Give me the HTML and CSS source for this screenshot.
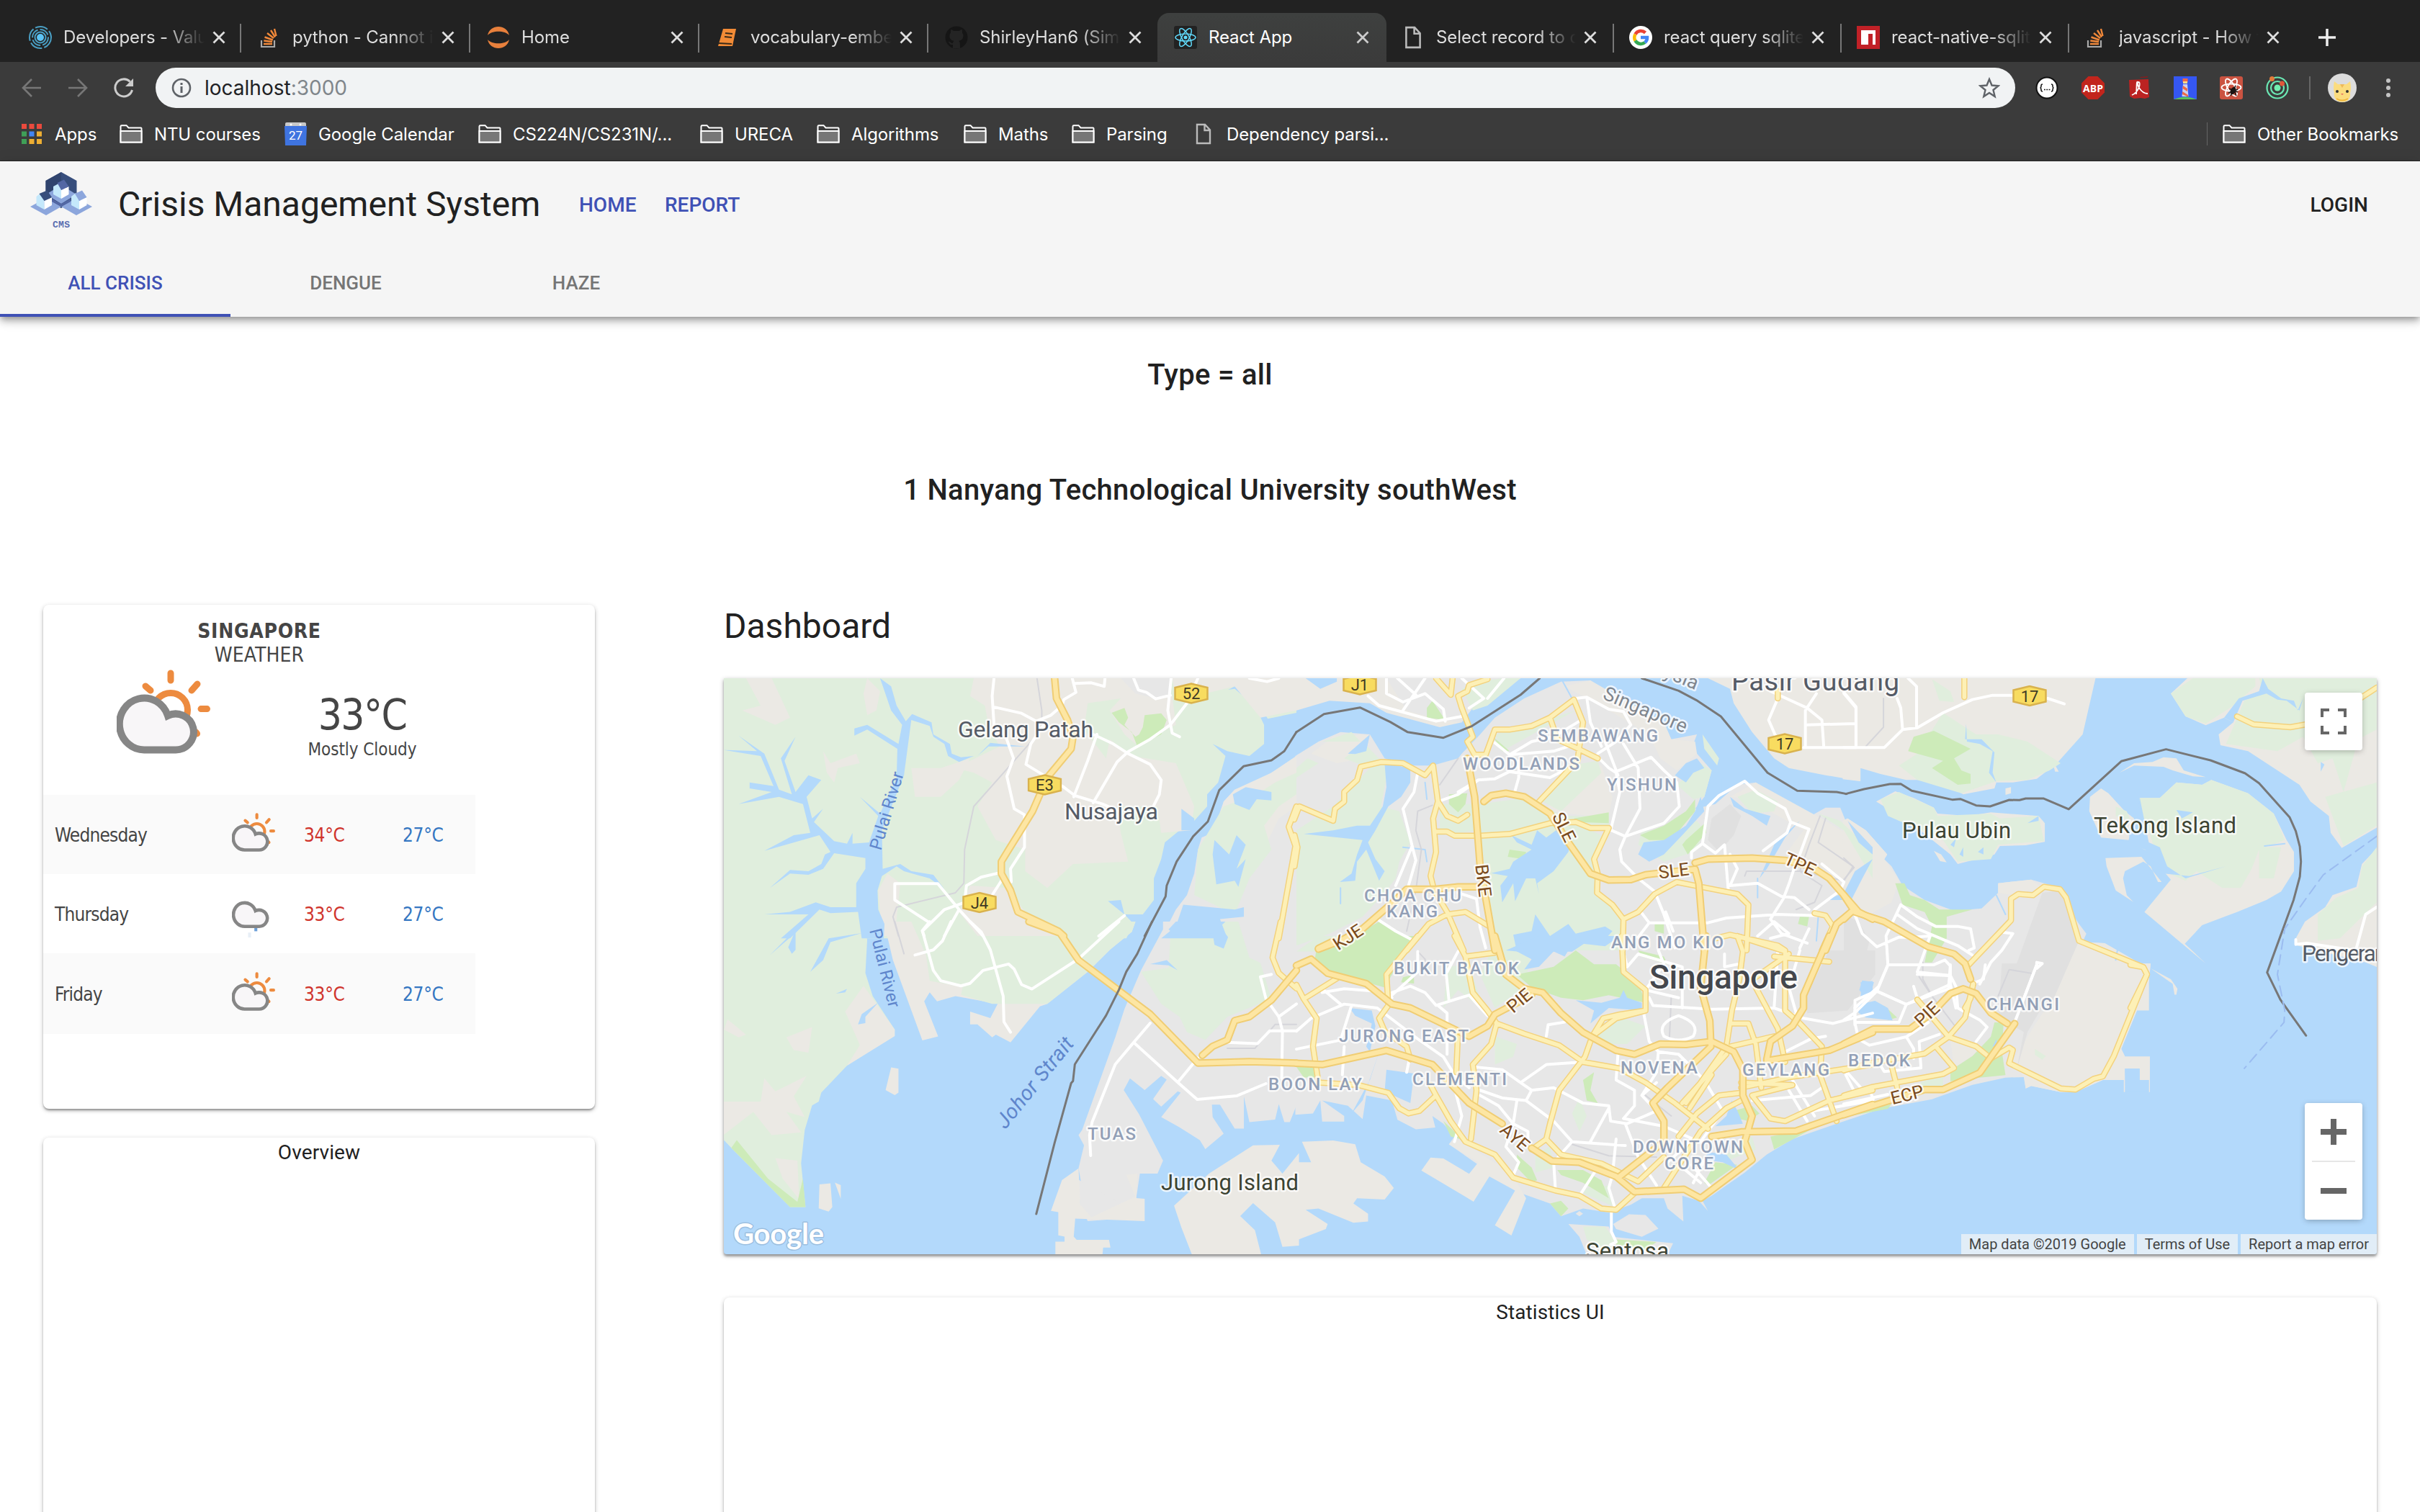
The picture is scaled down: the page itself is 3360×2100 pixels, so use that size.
FILE: index.html
```html
<!DOCTYPE html>
<html lang="en">
<head>
<meta charset="utf-8">
<title>React App</title>
<link rel="stylesheet" href="styles.css">
</head>
<body>
<svg class="sprite" width="0" height="0">
  <defs>
    <symbol id="folder" viewBox="0 0 32 26"><path d="M1.5 24.5V2.5Q1.5 1.2 3 1.2H9.5L12.5 4.5H29.5Q30.5 4.5 30.5 5.5V24.5Z" fill="#3b3b3b" stroke="#fff" stroke-width="2"/><path d="M1.5 9H30.5V24.5H1.5Z" fill="#777" stroke="#fff" stroke-width="2"/></symbol>
    <symbol id="page" viewBox="0 0 22 30"><path d="M2 2H13L20 9.500V28H2ZM12.500 2V10H20" fill="none" stroke="#bbb" stroke-width="2.400"/></symbol>
    <symbol id="x" viewBox="0 0 18 18"><path d="M1.500 1.500L16.500 16.500M16.500 1.500L1.500 16.500" stroke="currentColor" stroke-width="2.800"/></symbol>
    <symbol id="stack" viewBox="0 0 32 32"><path d="M5 20V29H23V20" fill="none" stroke="#aaa" stroke-width="2.200"/><path d="M8 25H20M8.300 20.500L20 22M9.500 15.500L20.800 19.500M13 10L22 17M18 6L24 15.500M23 4L25.500 14" stroke="#f0883a" stroke-width="2.400"/></symbol>
    <symbol id="sun-cloud" viewBox="0 0 130 117">
      <g stroke="#ed8b3f" stroke-width="9" stroke-linecap="round" fill="none"><path d="M75 5V15M117 54.600H125.500M40 23L47 29M112 20L104 29M110 87L111.500 89"/><circle cx="75" cy="56" r="23.500"/></g>
      <path d="M40 111.500H82A25 25 0 1 0 71 64A34.500 36 0 1 0 40 111.500Z" fill="#f8f6f8" stroke="#868686" stroke-width="10"/>
    </symbol>
    <symbol id="rain-cloud" viewBox="0 0 130 140">
      <path d="M72 105V119" stroke="#6c9fd8" stroke-width="9"/><path d="M53 123V138" stroke="#e8eff6" stroke-width="9"/>
      <path transform="translate(0 -7)" d="M40 111.500H82A25 25 0 1 0 71 64A34.500 36 0 1 0 40 111.500Z" fill="#f8f6f8" stroke="#868686" stroke-width="10"/>
    </symbol>
    <symbol id="shield" viewBox="0 0 48 30"><path d="M1.500 7L24 1.500L46.500 7V23L24 28.500L1.500 23Z" fill="#f8dc60" stroke="#d9b24d" stroke-width="2.500"/></symbol>
  </defs>
</svg>

<header class="browser">
  <div class="tabstrip">
    <div class="tab"><svg class="fav" viewBox="0 0 32 32"><g fill="none" stroke="#4a9fc4" stroke-width="2"><circle cx="16" cy="16" r="15" stroke-dasharray="18 3"/><circle cx="16" cy="16" r="11" stroke-dasharray="14 3"/><circle cx="16" cy="16" r="7.500"/></g><circle cx="16" cy="16" r="5" fill="#5cc4f5"/></svg><span class="label">Developers - Value</span><svg class="x"><use href="#x"/></svg></div>
    <div class="tab"><svg class="fav"><use href="#stack"/></svg><span class="label">python - Cannot i</span><svg class="x"><use href="#x"/></svg></div>
    <div class="tab"><svg class="fav" viewBox="0 0 32 32"><path d="M1 13C4-3 28-3 31 13C25 6 7 6 1 13ZM1 19C4 35 28 35 31 19C25 26 7 26 1 19Z" fill="#e8803c"/></svg><span class="label">Home</span><svg class="x"><use href="#x"/></svg></div>
    <div class="tab"><svg class="fav" viewBox="0 0 32 32"><path d="M10 4H28L23 28H3Z" fill="#f28b36"/><path d="M13 10L23 11M12 15L22 16M4 24L22 25" stroke="#3a2a18" stroke-width="2"/></svg><span class="label">vocabulary-embed</span><svg class="x"><use href="#x"/></svg></div>
    <div class="tab no-line"><svg class="fav" viewBox="0 0 32 32"><circle cx="16" cy="16" r="15.500" fill="#151515"/><path d="M11 31V26C6 27 7 23 4 22C8 21 8 25 11 24C11 22 12 21 13 21C7 20 6 16 6.500 13C6.500 11 8 10 8 9C8 8 8 6 8.500 5C10 5 12 7 12 7H20C20 7 22 5 23.500 5C24 6 24 8 24 9C24 10 26 12 25.500 14C25 18 23 20 19 21C21 22 21 24 21 31Z" fill="#242424"/></svg><span class="label">ShirleyHan6 (Simo</span><svg class="x"><use href="#x"/></svg></div>
    <div class="tab active"><svg class="fav" viewBox="0 0 32 32"><rect width="32" height="32" rx="3" fill="#222"/><g fill="none" stroke="#61dafb" stroke-width="1.500"><ellipse cx="16" cy="16" rx="14" ry="5"/><ellipse cx="16" cy="16" rx="14" ry="5" transform="rotate(60 16 16)"/><ellipse cx="16" cy="16" rx="14" ry="5" transform="rotate(120 16 16)"/></g><circle cx="16" cy="16" r="2.500" fill="#61dafb"/></svg><span class="label">React App</span><svg class="x"><use href="#x"/></svg></div>
    <div class="tab narrow"><svg class="fav"><use href="#page"/></svg><span class="label">Select record to d</span><svg class="x"><use href="#x"/></svg></div>
    <div class="tab narrow"><svg class="fav" viewBox="0 0 32 32"><circle cx="16" cy="16" r="16" fill="#fff"/><g fill="none" stroke-width="4.500"><path d="M22.500 9.500A9 9 0 0 0 8.500 11.500" stroke="#ea4335"/><path d="M8.500 11.500A9 9 0 0 0 8.500 20.500" stroke="#fbbc05"/><path d="M8.500 20.500A9 9 0 0 0 21.800 23" stroke="#34a853"/><path d="M21.800 23A9 9 0 0 0 25 16H16" stroke="#4285f4"/></g></svg><span class="label">react query sqlite</span><svg class="x"><use href="#x"/></svg></div>
    <div class="tab narrow"><svg class="fav" viewBox="0 0 32 32"><rect width="32" height="32" fill="#c12127"/><path d="M6 6H26V26H22V11H16V26H6Z" fill="#fff"/></svg><span class="label">react-native-sqlit</span><svg class="x"><use href="#x"/></svg></div>
    <div class="tab narrow no-line"><svg class="fav"><use href="#stack"/></svg><span class="label">javascript - How t</span><svg class="x"><use href="#x"/></svg></div>
    <svg class="plus" viewBox="0 0 24 24"><path d="M12 0V24M0 12H24" stroke="#eee" stroke-width="3.500"/></svg>
  </div>

  <div class="toolbar">
    <div class="nav">
      <svg viewBox="0 0 28 28"><path d="M27 14H2M14 2L2 14L14 26" fill="none" stroke="#777" stroke-width="2.600"/></svg>
      <svg viewBox="0 0 28 28"><path d="M1 14H26M14 2L26 14L14 26" fill="none" stroke="#777" stroke-width="2.600"/></svg>
      <svg viewBox="0 0 28 28"><path d="M25.500 17A12 12 0 1 1 22.500 5.500" fill="none" stroke="#ccc" stroke-width="3"/><path d="M27 1V12H16Z" fill="#ccc"/></svg>
    </div>
    <div class="omnibox">
      <svg class="info" viewBox="0 0 28 28"><circle cx="14" cy="14" r="12" fill="none" stroke="#5f6368" stroke-width="2.600"/><path d="M14 12V21M14 7V10" stroke="#5f6368" stroke-width="3"/></svg>
      <span class="url">localhost<span>:3000</span></span>
      <svg class="star" viewBox="0 0 30 30"><path d="M15 3L18.500 11.500L27.500 12.200L20.500 18L22.700 27L15 22L7.300 27L9.500 18L2.500 12.200L11.500 11.500Z" fill="none" stroke="#5f6368" stroke-width="2.400"/></svg>
    </div>
    <div class="extensions">
      <svg viewBox="0 0 32 32"><circle cx="16" cy="16" r="14.500" fill="#fff" stroke="#111" stroke-width="2"/><path d="M10 11Q8 11 8 13Q8 16 6.500 16Q8 16 8 19Q8 21 10 21M22 11Q24 11 24 13Q24 16 25.500 16Q24 16 24 19Q24 21 22 21" fill="none" stroke="#111" stroke-width="1.500"/><path d="M12 18.500H21" stroke="#111" stroke-width="1.500" stroke-dasharray="1.800 1.500"/></svg>
      <svg viewBox="0 0 32 32"><path d="M9.500 0H22.500L32 9.500V22.500L22.500 32H9.500L0 22.500V9.500Z" fill="#c2251c"/><text x="16" y="21.500" class="abp">ABP</text></svg>
      <svg viewBox="0 0 32 32"><path d="M2 5L29 4L30 29L24 31L18 30L9 31L3 28Z" fill="#bb2322"/><path d="M17 1L28 0V1.500L18 2Z" fill="#8c1c1c"/><path d="M6 26C16 22 19 8 15 8C11 9 18 24 28 24M14 8C12 6 13 15 12 25" fill="none" stroke="#fff" stroke-width="1.800"/></svg>
      <svg viewBox="0 0 32 32"><rect width="32" height="32" fill="#3557f2"/><path d="M0 32Q16 25 32 32Z" fill="#59c25c"/><path d="M13 11H19L20.500 28H11.500Z" fill="#ccd0ee"/><path d="M13 13L19 17V21L12.500 17ZM12.200 21L20 26V28.500L12 25ZM12.500 3H19.500V8H12.500Z" fill="#ee6a45"/><path d="M13 7H19V10H13Z" fill="#ffd98a"/></svg>
      <svg viewBox="0 0 32 32"><rect width="32" height="32" rx="3" fill="#cb5341"/><g fill="none" stroke="#fff" stroke-width="1.800"><ellipse cx="16" cy="15.500" rx="13.500" ry="5"/><ellipse cx="16" cy="15.500" rx="13.500" ry="5" transform="rotate(60 16 15.500)"/><ellipse cx="16" cy="15.500" rx="13.500" ry="5" transform="rotate(120 16 15.500)"/></g><ellipse cx="18.500" cy="20" rx="3.500" ry="5.500" transform="rotate(25 18.500 20)" fill="#1d1513"/><path d="M13 17L25 22M12 23L25 18M15 27L22 13M23 27L19 18" stroke="#1d1513" stroke-width="1.600"/></svg>
      <svg viewBox="0 0 32 32"><g fill="none" stroke="#6be8b4" stroke-width="2.200"><circle cx="16" cy="16" r="14.500"/><circle cx="16" cy="16" r="9"/></g><circle cx="16" cy="16" r="4.500" fill="#72f0b0"/><circle cx="8.500" cy="3.500" r="3.500" fill="#e27b3b"/><circle cx="22.500" cy="10" r="3.500" fill="#e0573a"/></svg>
    </div>
    <i class="bar-line"></i>
    <svg class="avatar" viewBox="0 0 40 40"><circle cx="20" cy="20" r="20" fill="#dcdcdc"/><path d="M9 11L14 15H26L31 11Q33 22 31 27Q32 34 27 38Q20 41 13 38Q8 34 9 27Q7 20 9 11Z" fill="#fbdc7e"/><path d="M17 15L20 20L23 15Z" fill="#eeb958"/><circle cx="13" cy="25" r="2" fill="#333"/><circle cx="27" cy="25" r="2" fill="#333"/><path d="M18 28H22L20 30Z" fill="#e46a5e"/><path d="M12 35Q20 40 28 35" fill="none" stroke="#efb73d" stroke-width="2"/></svg>
    <svg class="dots" viewBox="0 0 6 28"><g fill="#c4c4c4"><circle cx="3" cy="4" r="3"/><circle cx="3" cy="14" r="3"/><circle cx="3" cy="24" r="3"/></g></svg>
  </div>

  <div class="bookmarks">
    <a class="bm"><svg class="apps" viewBox="0 0 28 28"><path d="M0 0H7V7H0ZM10.500 0H17.500V7H10.500ZM21 0H28V7H21Z" fill="#ea4a3d"/><path d="M0 10.500H7V17.500H0ZM0 21H7V28H0Z" fill="#3f9f57"/><path d="M10.500 10.500H17.500V17.500H10.500Z" fill="#4285f4"/><path d="M21 10.500H28V17.500H21ZM10.500 21H17.500V28H10.500ZM21 21H28V28H21Z" fill="#edae33"/></svg>Apps</a>
    <a class="bm"><svg><use href="#folder"/></svg>NTU courses</a>
    <a class="bm cal"><svg viewBox="0 0 32 32"><rect x="1" width="29" height="9" rx="2" fill="#c8c8c8"/><circle cx="9" cy="3" r="1.500" fill="#fff"/><circle cx="22" cy="3" r="1.500" fill="#fff"/><path d="M0 5H31L30 32H1Z" fill="#3f74e0"/><text x="15.500" y="24" class="cal-day">27</text></svg>Google Calendar</a>
    <a class="bm"><svg><use href="#folder"/></svg>CS224N/CS231N/...</a>
    <a class="bm"><svg><use href="#folder"/></svg>URECA</a>
    <a class="bm"><svg><use href="#folder"/></svg>Algorithms</a>
    <a class="bm"><svg><use href="#folder"/></svg>Maths</a>
    <a class="bm"><svg><use href="#folder"/></svg>Parsing</a>
    <a class="bm doc"><svg><use href="#page"/></svg>Dependency parsi...</a>
    <a class="bm other"><svg><use href="#folder"/></svg>Other Bookmarks</a>
  </div>
</header>

<header class="appbar">
  <div class="brand-row">
    <svg class="logo" viewBox="0 0 88 80"><path d="M21.500 12L43 0L64.500 12V38L43 50L21.500 38Z" fill="#374e7c"/><path d="M21.500 12L43 0V50L21.500 38Z" fill="#30446e"/><path d="M43 18L64 31L43 44L22 31Z" fill="#8ca6dc"/><path d="M0 48L22 36L43 48L22 60ZM43 48L64 36L86 48L64 60Z" fill="#8ca6dc"/><path d="M30 41L43 48L56 41V37L43 44L30 37Z" fill="#5367a4"/><path d="M32 20L43 14L43 37L32 31Z" fill="#c4e8fb"/><path d="M43 25L53.500 20V31L43 37Z" fill="#fff"/><path d="M37.500 15L47 10.500L53.500 20L43 25Z" fill="#5367a4"/><g transform="translate(-23.500 15)"><path d="M32 19L38 14L43 25V37L32 31Z" fill="#c4e8fb"/><path d="M43 25L53.500 20V31L43 37Z" fill="#fff"/><path d="M36 15L47 10.500L53.500 20L43 25Z" fill="#374e7c"/></g><g transform="translate(25 15)"><path d="M32 19L38 14L43 25V37L32 31Z" fill="#c4e8fb"/><path d="M43 25L53.500 20V31L43 37Z" fill="#fff"/><path d="M37 15L47 10.500L53.500 20L43 25Z" fill="#8ca6dc"/></g><text x="43" y="77" class="logo-text" textLength="24">CMS</text></svg>
    <h1>Crisis Management System</h1>
    <a class="link home">HOME</a>
    <a class="link report">REPORT</a>
    <a class="link login">LOGIN</a>
  </div>
  <nav class="tabs">
    <a class="selected">ALL CRISIS</a><a>DENGUE</a><a>HAZE</a>
  </nav>
</header>

<main>
  <h2 class="line-title">Type = all</h2>
  <h2 class="line-title">1 Nanyang Technological University southWest</h2>
  <div class="columns">
    <aside>
      <section class="card weather">
        <div class="now">
          <div class="city-name">SINGAPORE</div>
          <div class="sub">WEATHER</div>
          <div class="current">
            <svg><use href="#sun-cloud"/></svg>
            <div class="reading"><div class="deg">33°C</div><div class="cond">Mostly Cloudy</div></div>
          </div>
        </div>
        <div class="day odd"><span>Wednesday</span><svg><use href="#sun-cloud"/></svg><b class="hi">34°C</b><b class="lo">27°C</b></div>
        <div class="day"><span>Thursday</span><svg class="rain"><use href="#rain-cloud"/></svg><b class="hi">33°C</b><b class="lo">27°C</b></div>
        <div class="day odd"><span>Friday</span><svg><use href="#sun-cloud"/></svg><b class="hi">33°C</b><b class="lo">27°C</b></div>
      </section>
      <section class="card overview">Overview</section>
    </aside>
    <section class="dash">
      <h2>Dashboard</h2>
      <div class="map">
        <svg class="canvas" viewBox="0 0 2295 800">
          <defs>
            <g id="streets">
              <g class="t-a"><path d="M745 366L740 440L745 560M742 485L820 512L860 545L900 520L930 480L935 455L968 425L958 366M965 388L1010 385L1045 400L1047 366M775 600L798 700L780 775L800 910L828 935L828 1070L790 1160L792 1215M880 560L845 640L832 725L880 770L935 820L965 855L1040 890L1085 920M1025 600L1000 710L962 860M1015 600L1070 640L1110 680L1170 725L1200 790L1195 850L1180 895M1015 885L1080 715L1110 672L1170 620L1225 560L1250 510L1280 450M1227 366L1218 500L1230 595L1250 610M1125 366L1138 415L1160 425L1185 452L1225 437M1290 400L1300 366M1440 366L1488 380L1520 366M765 1175L710 1195L670 1230L665 1300L610 1330L550 1420L555 1440M475 1222H592L650 1330L715 1440M475 1222V1290L570 1385M650 1330L610 1440M765 1210L740 1270M1100 1355L1030 1440"/></g>
              <g class="t-b"><path d="M245 66V130L290 165L350 130L400 195L405 245M195 140L225 180L380 245L450 225M290 200L350 66M275 66L325 135M450 66L510 150L470 190M565 66L520 150M760 150L790 145L850 195L890 205L910 260L870 330L820 380M790 145L800 250L830 350M440 540L495 490L540 485L580 455L690 480L740 440M540 335L580 385L640 330L700 310L770 245M580 385L700 370L740 350M820 395L850 440L870 460L880 540L855 700M840 330L875 470M890 340L930 440L935 610L895 725M870 455L965 395L1000 450L1035 500L1042 600L1000 670L895 725L850 695M895 725L880 780L885 830L930 900L975 955L1000 1050L1030 1190M605 410V480L595 535M330 460L320 540L290 610L315 765L325 825L305 930M315 765L270 930M225 1075L270 1120L320 1160M385 580L440 550L495 490M440 960L490 985L500 1105L515 1190M1075 815V790L1105 755L1140 795L1165 760L1175 945M1105 755L1120 600L1150 555L1220 495L1255 545L1330 610L1345 665L1395 695L1370 800M1345 665L1335 710L1270 785M1180 800L1200 860L1180 930L1255 920L1320 975L1355 980L1395 1030M1365 810L1340 925L1325 985L1290 1070L1320 1130L1390 1170M1430 840L1490 915L1480 950L1410 1030M940 1045L960 1085H1120L1170 1065L1310 1050L1420 1055M960 1085L930 1145M1005 1040L1025 1120M1290 120L1390 190L1430 240L1435 350M1390 260L1523 255M1415 130L1385 200V350M1490 130L1523 190V355H1380M1310 150L1285 240L1305 310M1255 1140L1300 1080L1340 1130L1290 1150M1395 1110L1370 1190"/></g>
              <g class="t-c"><path d="M0 125L33 185V355H110L160 280L155 190L145 150M175 66L198 100V272M160 280L200 272L270 210L350 155L405 137H460M555 150L600 173M0 355H110M1230 1155V1175L1260 1170L1390 1200M1395 1190L1420 1050L1450 1020M155 1010L200 1060L250 1100H310L345 1110L355 1190L340 1200M145 1050L200 1110L310 1180L350 1220M155 1010L115 1140L120 1260L95 1350L30 1440M30 1050L50 1130L90 1185L150 1145H190L235 1140L200 1290L290 1305L285 1345L170 1425L90 1370M120 1260H245L275 1240L290 1265V1340L305 1440M370 1340L400 1250L430 1200L460 1130L435 1125M525 1250L540 1255L525 1275ZM525 1260L490 1400"/></g>
              <g class="t-d"><path d="M550 35L580 190L600 230L655 250L680 240L715 190L785 165L800 185L820 245L848 262L975 145L1085 0M680 0L710 40L735 110L770 290L772 390L790 430M530 130L580 110L605 75L628 0M570 0L550 35M1170 395L1125 470L1075 555L1012 780L1005 830L1008 910M1125 470L1245 625L1298 692L1405 678L1485 630M1300 530L1245 625M1380 470L1462 475L1495 425H1568M1500 205L1470 215L1485 300L1520 370L1530 425L1528 610M1520 370L1568 320"/></g>
              <g class="t-e"><path d="M0 370L40 320L130 265L220 280L330 400L400 470L430 540L470 590M0 440L120 405L150 270M70 205L120 265M70 220L130 205L220 215L260 240M130 430L125 540M260 220L310 195L350 220L380 270L470 230L520 310M385 270L410 300V460M405 110L415 250M260 230L330 140V60M410 140L440 60M300 530L310 460M470 540L490 510L560 520L610 570L640 600L700 590L780 650L850 660L855 720L900 730L980 680L940 620L980 570M610 570L680 500L780 490M640 600L625 640L560 630L500 600M600 640L590 730L630 760V800M500 620L550 660L590 730L570 820L605 880L590 930M625 640L700 720L750 800L895 815M850 670L800 800M750 800L700 880L705 990M430 590L450 700L430 800M870 790L860 930L850 980L865 1050M895 730L930 860L980 970M820 900L775 1000M875 460L870 560L920 600L920 660L890 710L1000 740L1080 790L1010 880M680 390L685 345L730 335M945 300L960 410L985 450L980 530L940 620M960 240L970 270L1130 285L1300 280L1380 320L1460 340L1568 300M890 60L900 120L930 70L1050 120V280M985 56L1000 110L950 210L1040 240M1040 310Q1100 340 1080 390Q1040 420 1000 390Q980 340 1040 310M985 450L1040 460L1110 560L1160 680L1100 800M1340 600L1390 720M1350 560L1410 700M1240 640L1400 620L1440 580M1370 690L1568 640M1495 540L1520 610M1330 450L1400 400L1440 390M1370 56L1340 200L1360 300M1165 70V120L1200 110M1075 890L1130 980M1050 900L1100 960M1110 870L1080 960M857 1075V1150L870 1190L855 1200M1310 56L1300 280M1520 330V250L1568 220"/></g>
              <g class="t-f"><path d="M120 0L90 110L30 200L0 230M90 110L170 165L285 100L290 0M170 165L150 240L30 240L40 310L70 335L170 300L230 240M30 190V250M190 90L200 140M200 40L290 45L305 90L310 180L370 230L390 260L360 320M0 580L120 540M10 450L45 510M100 420L110 445L210 430L205 320L260 290M525 0L465 240M385 0L380 60L355 75M75 540L80 560M170 300L190 350V390"/></g>
            </g>
            <g id="arterials">
              <g class="t-a"><path d="M1568 900L1547 985L1565 1065L1520 1450"/></g>
              <g class="t-b"><path d="M380 66L420 135L425 66M520 70L470 95L465 120L440 140L450 190L480 310L465 330L485 385H515L540 280L580 280L640 265L690 230L755 155L780 250L770 350L765 410L740 450L660 580M690 230L710 320L760 355L820 400M-6 655L8 600L100 660L105 610L130 580V540L165 490L175 435L230 415L290 420L350 470L372 430L385 580L372 650L380 790L365 890L375 950L410 1040L455 1200M385 580L410 640L440 660L465 635M380 705L410 705L430 722H500L580 715L690 670L760 665L800 690H850L810 820L820 880L818 960L860 1010L890 1070L888 1200M890 1070L930 1040L975 965L1035 915L1100 935L1200 965L1230 1010L1225 1200M-5 850L3 770L-5 720M300 1200L360 1090L410 1050L460 1040L525 1100M1140 1150L1180 1135L1310 1180L1330 1200M1410 1045L1440 1055L1460 1100L1430 1200M1310 120V150"/></g>
              <g class="t-c"><path d="M328 66V145M1070 225L1115 258L1215 270L1270 255M1400 155L1450 105M340 1260L455 1075V985L475 965L515 970L545 935L588 945L605 980L640 1160L815 1270L825 1300L780 1440M352 1340L345 1400L330 1440"/></g>
              <g class="t-d"><path d="M1568 260L1520 200L1503 140L1525 0"/></g>
              <g class="t-e"><path d="M0 190L20 245L55 320L45 430L60 570L170 580L250 610L280 670L305 690L335 680L380 620L365 580M20 245L110 165M330 0L245 150L250 270L225 320L240 370L300 430L310 480M440 370L435 530M430 0L460 80L480 220L520 290L545 340L530 420L480 500L490 600L475 790M460 80L540 65M545 340L620 380L715 425L780 490L880 515L950 570L1030 650L1120 750M885 0L890 140L950 210V290L880 305L835 320L805 390L785 470L715 600L690 730L680 790L640 830M950 290L870 320L805 390M380 620L420 720L460 800L540 850L590 940L705 990L770 1010L830 1060L870 1065L920 1000M680 790L720 850L830 885L930 955L1000 860M1200 0L1215 60L1205 170L1185 290L1170 430L1060 650M1200 0L1330 60L1330 290L1370 340L1430 430L1425 540L1470 720M1250 200L1310 360L1330 490M1185 340H1230L1250 420L1265 590M1180 430L1300 390M1300 80L1450 100M1340 70L1240 170M1170 460L1050 650M1130 540L1070 670M1210 610L1150 620L1090 690L1040 780M1210 590L1340 550L1568 500M1210 570L1350 580L1240 620L1290 710L1330 720L1450 640L1568 600M1210 640L1170 670L1100 760L1000 980"/></g>
              <g class="t-f"><path d="M0 440L70 410L220 370L285 300L330 220L352 80M200 145L285 300L360 340L400 390L450 345L460 355L450 410L590 515L630 520L680 475L705 465L735 380L825 40L815 10L780 0M250 340L300 430L270 455L75 510L0 545M130 420L145 510"/></g>
            </g>
            <g id="highways">
              <g class="t-a"><path d="M910 366L915 450L945 540L960 610L955 660L890 780L850 920L785 1080L765 1130V1180L790 1250L810 1340L920 1420L935 1440"/></g>
              <g class="t-b"><path d="M465 400L485 560L500 850L540 1200M510 580L530 555L570 545L620 560L690 630L740 750L800 880L850 907L910 905L950 885L1085 862L1095 920L1110 1200M1085 835L1120 820L1240 815L1330 825L1400 850L1450 900L1530 1040L1568 1070M1510 1040L1470 1090L1440 1200M60 1195L120 1160L180 1110L270 990L300 945H380L440 935H510"/></g>
              <g class="t-c"><path d="M0 970L30 1040L110 1080L230 1185L300 1215L330 1255L345 1320M0 1070L20 1040"/></g>
              <g class="t-d"><path d="M840 0L925 45L975 150L1100 285L1170 360L1300 550L1440 545L1568 550M1568 190L1500 305L1440 370L1400 385L1380 460L1340 485L1312 520"/></g>
              <g class="t-e"><path d="M60 48L100 20M0 115L40 90L85 145L190 185L260 265L310 280L440 370L470 390L520 350L540 305L640 230M540 0L570 150L620 205L670 220L720 300L780 375L870 445L920 460L990 420L1060 422L1130 410L1190 450L1215 520V620L1240 700L1220 800L1240 870L1100 1020L1055 985L920 995L870 935L770 880L695 875L640 825M1115 0L1100 200L1125 330L1128 430L1010 590L970 650L1000 720V800L880 935M0 495L70 500L245 445L370 500L470 650L560 730M1130 780L1210 762L1360 758L1568 655M1450 0L1380 230V280L1350 350L1290 410L1280 480M1280 485L1450 445L1568 375"/></g>
              <g class="t-f"><path d="M0 330L80 268H180L240 200L290 120L325 100L360 120L400 200L445 245M465 245L370 450L270 520L220 520L0 625"/></g>
            </g>
          </defs>

          <g class="green">
            <path class="t-a" d="M0 366H1568V510L1490 535L1450 440L1400 400L1350 440L1330 425L1400 410L1455 480L1480 560V640L1440 690L1380 670L1340 640L1375 690L1355 800L1325 850V900L1290 960L1250 1000L1210 1050L1200 1120L1180 1200V1290L1150 1350H1100L1125 1390L1105 1450H0Z"/>
            <path class="t-d" d="M0 0H385L400 70L395 200L415 290L475 420L472 445L345 560L275 665L268 700L250 715L230 810L220 940L232 1110H190L30 880L10 850Z"/>
          </g>
          <path class="t-d beige" d="M445 0H1130L1120 40L1060 110L1000 195L890 320L870 330L790 470L750 440L740 450L700 400H680V350L735 375L755 320L640 290L590 310L570 275L555 310L593 447L550 462L470 150Z"/>
          <path class="t-d green" d="M520 0H1130L1120 40L1060 110L1000 195L890 320H740L655 285L660 255L570 230L560 130Z"/>
          <g class="beige">
            <path class="t-a" d="M690 366H1170L1230 440L1240 560L1130 640L1100 600L1060 500L1090 450L1000 470L990 580L1050 700L1060 620L1120 690L1240 720L1290 900L1280 1000L1200 1010L1190 900L1080 900L1090 1010L1110 1130L960 1140L890 1240L830 1170V1080L750 1040L700 900L740 800L690 760L640 740L760 650L730 560L720 480L680 440ZM70 366H140L190 530L150 560L60 500L110 480ZM400 366L435 420L425 500L400 520L390 430ZM520 740L600 740L680 700L650 790L600 860L530 860ZM280 670L300 720L370 680L380 720L320 740L310 800L290 760ZM1230 366H1568V500L1470 530L1400 400L1320 430L1240 450ZM455 1180L490 1220L475 1440H440L430 1250ZM680 1230L780 1240L830 1340L940 1440H700L650 1340ZM1460 830L1568 750V1440H1440L1420 1350L1450 1200L1500 1000Z"/>
            <path class="t-d" d="M390 250L410 290L475 420V445L345 560L380 480L340 350ZM180 450L250 410L240 510L200 500ZM120 610L150 660L235 600L200 680L230 760L180 740L220 820L140 830L90 740L0 840V700L110 700ZM20 380L70 440L50 450L10 420ZM150 920L210 930L215 1080L170 1000Z"/>
          </g>

          <g class="city">
            <path class="t-a" d="M1568 690L1500 760L1470 790L1400 830L1370 880L1360 960L1340 1010L1310 1030L1300 1080L1290 1180L1270 1270L1240 1330L1200 1450H1575V690Z"/>
            <path class="t-b" d="M-3 390L60 330L120 290L200 300L240 400L300 430H370L440 400L450 380L500 300L540 230L620 150L720 80L800 75L860 140L900 180L1000 250L1020 320L1090 300L1080 340L1090 380L1130 450L1110 560L1085 610L1140 590L1200 510L1250 500L1310 560L1400 640L1440 605H1480L1500 680L1575 780V1215H-3Z"/>
            <path class="t-c" d="M-3 660L10 650L60 700L118 800L110 820L130 850L160 930L220 990L300 1035L375 1025L420 960V920L510 905L590 940L610 1020L640 1090L660 1130L650 1165L710 1170L830 1275V1450H-3Z"/>
            <path class="t-d" d="M1205 30L1145 190L1100 340L1075 450L985 810L975 830L990 870L975 960L1000 1150L1155 1120L1132 1075L1142 980H1190L1205 930L1140 750L1098 655L1115 610L1155 655L1200 600L1215 615L1178 690L1200 720L1245 660L1253 665L1200 760L1250 800L1305 850L1320 885L1370 825L1340 760L1338 712H1360L1400 805H1425V680L1440 780L1510 770L1520 710L1535 780H1550L1575 690V0H1205Z"/>
            <path class="t-e" d="M-3 50H1575V680L1470 730L1350 790L1280 850L1220 920L1130 1010L1105 1030L1120 1070L1095 1030L1050 1010L1053 1110L1010 1060L1000 1020H940L910 1045L850 1075L780 1060L720 1090L690 1040L600 995L415 810L430 780L400 730L370 700L378 745L325 752L275 715L260 640L190 620L180 712L140 660L70 640L130 700V722H70L65 640L45 690L-3 695Z"/>
            <path class="t-f" d="M-3 -5H835L830 70L755 350L765 382H705L705 480L630 530H590L510 505L495 515L490 468L440 470L350 500L240 560L100 600L-3 645Z"/>
          </g>
          <path class="t-d city" d="M1130 1130V1150L1000 1165L980 1100L970 1000Z"/>

          <g class="beige">
            <path class="t-a" d="M1568 690L1500 760L1400 830L1370 880L1340 1010L1440 1200L1520 950L1568 900Z"/>
            <path class="t-b" d="M0 66H610L560 110L510 180L480 190L450 250L390 270L245 210L200 170L90 160L0 200ZM1120 66L1180 110L1190 170L1240 290L1300 400L1340 440L1440 470L1535 495V440H1575V66ZM730 100L800 75L1000 250L1020 320L1085 330L1090 380L1035 450L990 400L960 300L850 200ZM740 420L830 430L860 560L850 640L800 640L680 620ZM1180 560L1250 500L1440 660L1568 780V1080L1480 1000L1440 860L1330 800L1380 700L1230 570ZM100 310L200 300L180 400L110 420L40 380Z"/>
            <path class="t-c" d="M-3 66H685L650 300L580 420L525 485L460 500H415L410 525L325 550L280 510L210 490H170L100 465L45 440V495L-3 487ZM440 525L455 520V545L440 552ZM-3 660L10 650L60 700L118 800L110 820L150 910L130 1000L70 1050L0 960ZM635 1165L710 1170L830 1275V1450H560ZM420 920L510 905L540 940L460 970L420 960ZM835 1275L890 1320L908 1360L905 1385L900 1385L895 1340Z"/>
            <path class="t-c" d="M935 66L890 130L930 225L985 262L1035 230L1060 250L1020 300L1025 345L1100 370L1240 510L1270 580L1320 640L1325 710L1355 773L1460 680V66ZM1460 760L1410 840L1395 935L1330 970L1310 1020L1255 1080L1230 1150L1235 1180L1420 1250L1460 1275Z"/>
            <path class="t-c" d="M88 580L140 537L190 565L245 605L255 630L340 640L400 625L530 640L547 670V748L495 762L425 765L410 800L310 840L290 800L180 665ZM10 650L60 700L118 800L110 820L60 770L20 710ZM245 785L265 800L280 833L262 828ZM670 560L700 525L720 545L765 620L790 650L775 740L700 730L668 620ZM750 460L790 420L840 415L870 395L905 400L925 450L985 478L950 475L895 450L870 435L790 430ZM712 815L810 810L865 915L855 915L835 850L815 830L765 870L760 900L770 970L788 998L740 950L715 850ZM1000 490L1100 545L1170 630L1205 740L1225 790V870L1190 955L1150 990L1070 1040L975 1095L928 1172L985 1255L818 1040L890 905L870 870L860 810L805 770V565H860L905 500L975 510ZM565 400L585 455H575Z"/>
            <path class="t-d" d="M975 960L930 1005L900 1125L920 1130V1220L937 1225V1245H912V1300H1040L1042 1268H1062L1058 1238H970L962 1225L966 1155L1155 1165L1155 1078L1132 1075L1135 980L1105 985L1130 1070L1010 1150L980 1100ZM1235 1105L1330 980L1450 870L1523 868L1500 930L1530 980L1575 900V1260L1530 1265L1510 1170L1450 1095L1415 1145L1455 1200L1473 1300H1285L1255 1190ZM465 567L485 572V665L475 675L450 655ZM270 1022L300 1018L305 1110L295 1128L268 1115ZM312 1015L328 1025V1078Z"/>
            <path class="t-e" d="M15 800L100 795L160 810L175 880L240 935L265 980L240 1025L165 1020L155 1040L195 1080V1110L155 1115L60 1060L25 1065L85 1120L80 1140L-3 1185V880L40 880ZM415 810L495 880L470 925L400 865L365 862L340 912L482 1033L525 935L595 990L540 1125L585 1165L625 1020L600 960L560 900L440 790Z"/>
            <path class="t-f" d="M630 -5H835L830 70L755 350L765 382H833V530H830V480H805V433H765V530H762V480H705L630 530H590L510 505L495 515L490 468L460 400L520 250ZM290 310L340 310L370 360L300 430ZM0 0H20L10 160L0 170Z"/>
          </g>
          <g class="city"><path class="t-e" d="M740 1120L850 1130L860 1170L960 1185L1025 1195L1010 1240H790L770 1170ZM862 1120L905 1082L950 1085L985 1138L940 1170L870 1140ZM760 1080L770 1070L780 1080L770 1090Z"/><path class="t-b" d="M245 66H560L480 160L450 250L390 240L300 200Z"/><path class="t-a" d="M1090 366H1225V430L1185 450L1130 430Z"/></g>
          <g class="airport"><path class="t-c" d="M540 960L590 950L610 1020L640 1160L560 1440H410L460 1300ZM0 1050L40 1080L70 1160L40 1340L0 1440Z"/><path class="t-f" d="M430 -5H610L500 280L470 440L490 280L420 220ZM-3 0L60 -5L30 130L0 170Z"/><path class="t-e" d="M1450 56H1575V150L1500 290L1390 300L1385 240Z"/><path class="t-b" d="M1180 590L1210 640L1190 720L1150 790L1120 740L1130 650Z"/></g>

          <g class="green">
            <path class="t-a" d="M1460 850L1510 800L1568 760V850L1520 900L1480 980L1500 1080L1440 1200L1400 1350L1290 1270L1300 1080L1370 900Z"/>
            <path class="t-b" d="M70 330L150 290L180 340L130 400L200 440L100 600L0 700V1180L90 1130L180 1060L240 960L270 900L280 830L310 750L280 620L230 600L250 440L180 330ZM0 480L60 420L30 400L0 440ZM390 590L500 590L640 560L720 640L850 640L850 690L800 700L830 720L810 800L820 960L890 1070V1200H540L500 700L390 720ZM740 430L820 410L830 460L720 620L670 580ZM1100 420L1130 450L1110 560L1080 570L1035 510ZM940 700L1040 700L1090 660L1110 700L1090 780L1060 800L1000 830L930 760ZM1200 560L1250 530L1310 580L1300 620L1240 630ZM1105 300L1150 400L1145 430L1110 360ZM1420 630L1490 700L1568 900V790L1480 660ZM450 110L500 80L560 66H610L520 180L480 200ZM540 300L620 270L760 200L700 250L560 370Z"/>
            <path class="t-c" d="M100 570L150 540L245 605L255 640L400 630L425 650L530 640L545 745L420 760L400 820L310 830L270 740L120 640ZM150 430L200 380L270 210L360 300H420L500 330L590 420L560 450L500 490L415 495L320 545L200 490ZM950 66L890 130L930 225L985 255L1060 180L1120 100V66ZM1130 66H1450V280L1400 320L1360 540L1330 400L1290 420L1250 310L1180 370L1040 340L1090 160L1140 120ZM1310 560L1450 500V680L1360 765ZM1450 770L1410 850L1400 940L1340 980L1290 1050V1160L1350 1150L1450 1000ZM1000 490L1100 545L1170 630L1200 740L1130 780L1110 860L1080 940L1030 940L960 870L930 910L870 870L850 800L830 700L805 690V565H860L905 500L975 510ZM1130 770H1190L1170 900L1130 900ZM240 70L290 120L300 165L260 160ZM740 600L770 620L780 660L740 640Z"/>
            <path class="t-d" d="M1350 0H1410L1440 140L1470 160L1500 300L1380 370L1320 460L1270 430L1250 370L1200 320L1145 195L1220 180L1225 60L1340 45Z"/>
            <path class="t-e" d="M410 120L470 110L490 200L510 290L440 210L400 280ZM550 0L640 60L620 200L540 280L500 150ZM820 370L890 320L950 350L900 420H820ZM540 390L600 420L590 470L540 500ZM770 630L790 700L770 760L750 690ZM650 850L690 820L700 900L650 920ZM790 980L850 970L860 1050L780 1000ZM1160 860L1240 780L1250 830L1180 870ZM0 60L60 0H180L60 60ZM780 1130L840 1130L870 1190L840 1230L790 1180Z"/>
            <path class="t-f" d="M210 490L270 460V510L200 530ZM520 350L550 380L540 395L520 375Z"/>
          </g>
          <g class="park">
            <path class="t-a" d="M1065 510L1100 490L1110 530L1100 560L1130 610L1140 600L1150 570L1155 520L1200 512L1215 540L1200 600L1135 650L1120 590L1085 550Z"/>
            <path class="t-b" d="M370 160L405 240L355 230V190ZM415 550L465 545L460 590L440 625L415 590ZM535 310L580 370L560 370ZM935 720L1000 680L1060 620L1085 570V620L1020 740L960 740ZM1060 740L1115 665V710L1065 800L1050 760ZM580 780L625 790L620 820L575 810ZM755 650L850 625V670L760 665ZM90 1190L180 1120L225 1080L320 1160L300 1200ZM975 1090H1000V1130L975 1120ZM1370 1060L1395 1060L1390 1100L1365 1090Z"/>
            <path class="t-c" d="M190 310L245 285L345 360L300 400L320 450L345 465V505L310 510L240 440L270 410L175 370ZM140 920L165 920L180 970L220 990L260 1030H350L280 1060V1150L240 1250H220L240 1100L220 1040L160 1010Z"/>
            <path class="t-d" d="M45 850L130 1000L210 1090L225 1000L232 1110H190L30 880Z"/>
            <path class="t-e" d="M55 48L180 0H320L240 200L190 180L85 145L50 90ZM600 150L700 120L760 56L810 110L870 110L930 180L950 260L850 230L780 250L720 240L640 200ZM780 560L810 530L800 600L820 650L790 640ZM600 850L640 900L655 950L640 960L600 900ZM710 910L780 910L830 950L850 1020L780 960L720 930ZM690 1040L720 1030L740 1060L720 1090ZM400 720L430 760L445 790L420 780ZM1110 960L1140 880L1200 890L1120 970ZM1190 680L1240 660L1260 690L1230 720L1200 710ZM1290 780L1410 745L1300 830ZM870 1180L980 1190L950 1220L870 1200ZM290 160L320 150V185L285 180ZM930 56L1000 80L1010 110L940 80ZM0 510H50V550H20Z"/>
            <path class="t-f" d="M290 440L350 380L400 300L410 240H435L430 360L440 460L370 470L290 485ZM110 170L145 220L120 230ZM0 635L130 580L120 600Z"/>
          </g>

          <g class="water">
            <path class="t-a" d="M435 366L465 400L480 480L505 545L522 515L575 550L580 600L625 640L630 680L655 695L690 690L650 715L620 690L610 640L580 610L570 565L520 540L500 770L440 1000L442 1160L490 1140L520 1170L580 1185L610 1245L570 1200L500 1170L480 1150L440 1190L428 1250L430 1330L447 1390L445 1450H385L375 1340L300 1345L270 1330L190 1450H165L240 1350L120 1350L190 1340L260 1300L300 1320L370 1320V1220L395 1160V1115L310 1095L280 1160L240 1185L190 1180L135 1240L190 1165L240 1170L275 1140L285 1100L300 1090L270 1020L120 1085L200 1020L245 1010L225 890L160 860L50 890L140 840L80 825L80 800L145 815L110 690L10 665L100 670L50 605L120 680L160 830L195 850L165 700L205 610L175 710L205 840L240 770L275 790L235 860L250 950L280 910L255 965L310 1045L345 1055L360 1010V1055L405 1050L430 940L380 860L435 930L480 780L482 660L400 580L365 605V575L400 560L485 640L495 560L465 500ZM1385 1100L1345 1040L1340 1100L1350 1225L1400 1210L1410 1235L1430 1120L1405 1160L1430 1060L1405 1020ZM1395 850L1430 820L1500 840V875L1460 870L1440 915L1400 890ZM1255 1000V910L1290 950V1000ZM1260 1310L1400 1330L1425 1320V1360L1360 1370L1380 1450H1200L1240 1400ZM1055 1295L1090 1290L1100 1350ZM700 690L735 635L830 650L730 650Z"/>
            <path class="t-b" d="M240 420L310 440V500L285 560L250 600L215 700L195 750L215 820L240 870L225 910L190 780L165 830L160 910L118 915L150 880L165 800L180 740L20 715L100 700L165 680H200L235 600L245 520ZM585 720L640 760L655 700L680 730L715 690L745 760L740 790L700 870L655 920L660 965L650 900L625 900L595 995L590 920L560 1000L555 930L575 890L530 878L580 860L590 830L640 780L600 750ZM590 1135L640 1120L650 1050L690 1140L740 1090L760 1130L840 1100L860 1120L830 1170L790 1165L750 1205H600ZM1030 470L1060 420L1090 400L1110 440L1080 460L1060 500ZM1100 560L1110 620L1050 720L1000 800L960 830L930 800L945 750L1000 740L1060 680L1085 620ZM1180 560L1220 610L1290 640L1280 680L1240 640L1190 600ZM1370 660L1330 730L1280 860L1260 900L1300 760L1340 700ZM140 380L200 300L190 370L160 382ZM1490 960L1520 870L1568 820L1540 900L1510 990L1440 990ZM25 66L65 110L110 80V66Z"/>
            <path class="t-b" d="M1500 660L1530 750L1568 800V770Z"/>
            <path class="t-c" d="M333 255L330 320L375 320L410 375L405 460L415 500L395 460L405 370L370 340L335 330ZM1140 66L1155 110L1190 150L1225 160L1235 200L1250 150L1240 200L1205 160L1180 155L1150 130L1085 160L1060 250L1035 230L1075 150L1130 120ZM805 560L830 750L860 770L880 850L930 900L1040 850L940 890L870 880L820 780L780 760L775 700L800 640ZM905 615L950 625L920 650ZM500 670L530 640V660ZM290 760L305 735L300 770ZM315 800L325 770V810ZM365 790L380 770V800ZM1298 415L1308 425L1298 455ZM50 1330L80 1335L75 1380L45 1400Z"/>
            <path class="t-d" d="M1340 45L1345 90L1370 105L1382 60L1360 20L1375 0H1240L1220 30L1235 50ZM135 130L205 30V110L195 125L185 100L200 50ZM245 195L295 65L385 45L300 80L280 150ZM375 400L385 360L430 315L395 370V395ZM315 280L345 262L340 275ZM1170 165L1215 150L1245 190L1220 170Z"/>
            <path class="t-e" d="M245 520L320 535L310 650L240 605ZM570 56L660 0H890L860 20L840 40L780 30L760 10L730 80L700 60L660 120L620 130L640 90L600 60ZM145 280L205 290L215 350L200 450L190 430L200 380L205 340L160 310ZM760 250L830 260L880 240L890 210L900 240L940 260L940 290L850 280L800 340L810 290ZM1535 180L1568 175V230L1540 225ZM1185 640L1200 680L1215 730L1140 740L1170 700ZM1120 840L1170 850L1205 910L1160 880L1110 870ZM180 640L225 450L200 560L150 690Z"/>
            <path class="t-f" d="M50 65L82 72L75 110L55 130L42 105ZM40 165L85 150L120 180L133 232L60 220L40 200ZM415 310L418 340L405 340ZM765 433H805V480H830V530H768Z"/>
          </g>
          <g class="creek"><path class="t-b" d="M725 80L750 150M350 500L355 570M290 770L350 780L355 830M120 940V1005M1255 900V980M1420 1060L1415 1160M1160 480V530"/><path class="t-c" d="M415 970L440 1050M1145 765L1200 755M745 1195L740 1240"/></g>
          <g class="rails"><path class="t-a" d="M862 366L875 500V580L800 710L690 900L665 1080L663 1220L640 1260L480 1320L470 1360L485 1440"/><path class="t-d" d="M475 0L500 125M1380 493H1455L1510 400H1568"/><path class="t-b" d="M390 510L440 400M370 595L330 620L325 700L340 780L325 950L300 1120M1425 640L1395 760L1370 870L1430 930L1410 1000L1360 1030M1440 650L1420 750L1515 850L1490 910L1375 870H1225L1220 890"/><path class="t-c" d="M108 150V270L60 350M0 815L28 855L0 905M215 1250V1320L240 1390"/><path class="t-f" d="M205 0V50L240 130L300 250M510 35L450 20L420 130"/><path class="t-e" d="M750 810L850 855L980 860M950 620L1020 700M1020 240L1015 400M330 60L350 90V130"/></g>
          <use href="#streets" class="street"/>
          <use href="#arterials" class="art-case"/><use href="#arterials" class="art-core"/>
          <use href="#highways" class="hw-case"/><use href="#highways" class="hw-core"/>
          <g class="frontier">
            <path class="t-a" d="M1568 590L1535 670L1500 708L1424 733L1358 832L1327 963L1287 1025L1242 1130L1215 1230L1212 1275L1155 1440"/>
            <path class="t-d" d="M1175 0L1135 125L1105 195L1085 265L1050 365L965 555L960 620L955 628L910 860L860 1137"/>
            <path class="t-b" d="M0 290L75 215L173 188L255 248L302 290L400 314L478 265L610 135L662 66M940 66L1040 118L1088 157L1155 225L1282 460L1363 535L1470 540L1497 548"/>
            <path class="t-c" d="M5 548L55 528L125 507L155 506L185 535L295 572L317 569L360 596L398 600L450 573L478 574L495 567H543L612 612L755 412L877 362L998 408L1092 462L1130 503L1213 645L1230 703L1241 768L1244 830L1241 893L1224 990L1152 1292L1188 1405L1258 1555"/>
          </g>
          <path class="t-c ferry" d="M1450 725L1400 780L1305 885L1255 990L1200 1110L1180 1300L1200 1450L1198 1500L1090 1692"/>

          <g class="shields"><use href="#shield" x="625" y="6" width="48" height="30"/><use href="#shield" x="421.500" y="133" width="48" height="30"/><use href="#shield" x="331" y="296.500" width="48" height="30"/><use href="#shield" x="859" y="-6" width="48" height="30"/><use href="#shield" x="1449" y="76" width="48" height="30"/><use href="#shield" x="1789" y="9.500" width="48" height="30"/>
            <text x="649" y="29">52</text><text x="445.500" y="156">E3</text><text x="355" y="319.500">J4</text><text x="883" y="17">J1</text><text x="1473" y="99">17</text><text x="1813" y="32.500">17</text></g>
          <g class="town"><text x="325" y="82" textLength="188">Gelang Patah</text><text x="473" y="196" textLength="130">Nusajaya</text><text x="2191" y="393" textLength="134">Pengerang</text><text x="1399" y="17" textLength="233" class="big">Pasir Gudang</text></g>
          <g class="isle"><text x="1636" y="222" textLength="151">Pulau Ubin</text><text x="1902" y="215" textLength="198">Tekong Island</text><text x="607" y="711" textLength="191">Jurong Island</text><text x="1197" y="806" textLength="115">Sentosa</text></g>
          <g class="area"><text x="1130" y="88" textLength="167">SEMBAWANG</text><text x="1026" y="127" textLength="162">WOODLANDS</text><text x="1226" y="155.500" textLength="97">YISHUN</text><text x="889" y="309.500" textLength="135">CHOA CHU</text><text x="920" y="332" textLength="71">KANG</text><text x="1232" y="375" textLength="156">ANG MO KIO</text><text x="930" y="411" textLength="174">BUKIT BATOK</text><text x="854" y="505" textLength="180">JURONG EAST</text><text x="956" y="565" textLength="131">CLEMENTI</text><text x="756" y="572" textLength="130">BOON LAY</text><text x="1245" y="548.500" textLength="107">NOVENA</text><text x="1414" y="551.500" textLength="121">GEYLANG</text><text x="1561" y="538.500" textLength="86">BEDOK</text><text x="1753" y="461" textLength="101">CHANGI</text><text x="1262" y="659" textLength="153">DOWNTOWN</text><text x="1306" y="682" textLength="68">CORE</text><text x="505" y="641" textLength="67">TUAS</text></g>
          <g class="route"><text transform="translate(1319 268) rotate(-7)" y="8">SLE</text><text transform="translate(1494 259) rotate(24)" y="8">TPE</text><text transform="translate(867 360) rotate(-33)" y="8">KJE</text><text transform="translate(1054 281) rotate(83)" y="8">BKE</text><text transform="translate(1166 207) rotate(64)" y="8">SLE</text><text transform="translate(1671 467) rotate(-43)" y="8">PIE</text><text transform="translate(1643 579) rotate(-14)" y="8">ECP</text><text transform="translate(1098 638) rotate(41)" y="8">AYE</text><text transform="translate(1105 448) rotate(-40)" y="8">PIE</text></g>
          <g class="sea"><text transform="translate(218 240) rotate(-73.500)" textLength="112">Pulai River</text><text transform="translate(202 350) rotate(76)" textLength="112">Pulai River</text><text transform="translate(391 627) rotate(-51)" textLength="153" class="strait">Johor Strait</text></g>
          <g class="edge"><text transform="translate(1219 28) rotate(23)" textLength="124">Singapore</text><text transform="translate(1247 -25) rotate(22)" textLength="110">Malaysia</text></g>
          <text class="capital" x="1285" y="431" textLength="206">Singapore</text>
          <text class="google" x="13" y="786" textLength="126">Google</text>
        </svg>
        <button class="ctl full"><svg viewBox="0 0 36 36"><path d="M2 12V2H12M24 2H34V12M34 24V34H24M12 34H2V24" fill="none" stroke="#666" stroke-width="4"/></svg></button>
        <div class="ctl zoom"><svg viewBox="0 0 36 36"><path d="M18 0V36M0 18H36" stroke="#666" stroke-width="8"/></svg><i></i><svg viewBox="0 0 36 36"><path d="M0 18H36" stroke="#666" stroke-width="8"/></svg></div>
        <div class="legal"><span>Map data ©2019 Google</span><span>Terms of Use</span><span>Report a map error</span></div>
      </div>
      <section class="card stats">Statistics UI</section>
    </section>
  </div>
</main>
</body>
</html>
```

FILE: styles.css
```css
* { box-sizing: border-box; }
body { margin: 0; width: 3360px; height: 2100px; overflow: hidden; background: #fff; font-family: Roboto, sans-serif; color: #212121; }
h1, h2 { margin: 0; font-weight: 400; }
svg { display: block; flex: none; }
.sprite { position: absolute; }

/* browser window */
.browser { height: 224px; background: #3b3b3b; border-bottom: 1px solid #262626; font-family: Inter, sans-serif; color: #fff; }
.tabstrip { height: 86px; padding: 18px 0 0 17px; background: #222; display: flex; }
.tab { width: 318px; height: 68px; display: flex; align-items: center; padding: 0 22px 0 23px; position: relative; color: #dedede; }
.tab.narrow { width: 316px; padding: 0 24px 0 21px; }
.tab::after { content: ""; position: absolute; right: 0; top: 15px; width: 2px; height: 40px; background: #777; }
.tab.no-line::after, .tab.active::after { display: none; }
.tab.active { background: linear-gradient(#3e403f, #3b3b3b); color: #fff; border-radius: 16px 16px 0 0; padding-right: 24px; }
.tab.active .x { color: #ccc; }
.fav { width: 32px; height: 32px; margin-right: 16px; }
.label { flex: 1; overflow: hidden; white-space: nowrap; font-size: 24px; line-height: 32px; letter-spacing: -.1px; -webkit-mask-image: linear-gradient(90deg, #000 70%, transparent 97%); mask-image: linear-gradient(90deg, #000 70%, transparent 97%); }
.active .label { mask-image: none; -webkit-mask-image: none; }
.x { width: 18px; height: 18px; margin-left: 5px; }
.plus { width: 24px; height: 24px; margin: 22px 0 0 30px; }

.toolbar { height: 72px; display: flex; align-items: center; }
.nav { width: 216px; display: flex; gap: 36px; padding-left: 30px; }
.nav svg { width: 28px; height: 28px; }
.omnibox { width: 2582px; height: 56px; border-radius: 28px; background: #f1f3f4; display: flex; align-items: center; padding: 0 21px 0 22px; }
.info { width: 28px; height: 28px; margin-right: 18px; }
.url { flex: 1; font-size: 28px; color: #202124; }
.url span { color: #80868b; }
.star { width: 30px; height: 30px; }
.extensions { display: flex; gap: 32px; margin-left: 28px; }
.extensions svg { width: 32px; height: 32px; }
.abp { font: bold 14px "Open Sans", sans-serif; fill: #fff; text-anchor: middle; }
.bar-line { width: 2px; height: 32px; background: #666; margin: 0 24px 0 28px; }
.avatar { width: 40px; height: 40px; }
.dots { width: 6px; height: 28px; margin-left: 41px; }

.bookmarks { height: 56px; padding-left: 30px; display: grid; grid-template-columns: 136px 229px 269px 308px 162px 204px 150px 170px 1406px 1fr; align-items: center; }
.bm { display: flex; align-items: center; font-size: 24px; white-space: nowrap; letter-spacing: -.1px; }
.bm svg { width: 32px; height: 26px; margin-right: 16px; }
.bm .apps { width: 28px; height: 28px; margin-right: 18px; }
.bm.cal svg { height: 32px; margin-right: 15px; }
.bm.doc svg { width: 26px; height: 30px; margin-right: 19px; }
.bm.other { height: 32px; border-left: 1px solid #666; padding-left: 21px; }
.cal-day { font: 17px Roboto, sans-serif; fill: #fff; text-anchor: middle; }

/* application bar */
.appbar { position: relative; height: 216px; background: #f5f5f5; box-shadow: 0 4px 8px -2px rgba(0,0,0,.3), 0 8px 10px rgba(0,0,0,.14), 0 2px 20px rgba(0,0,0,.12); }
.brand-row { height: 120px; display: flex; align-items: center; padding: 0 72px 0 42px; }
.logo { width: 88px; height: 80px; margin: -10px 34px 0 0; }
.logo-text { font: bold 13px "Liberation Mono", monospace; fill: #5a6db0; text-anchor: middle; }
h1 { font-size: 48px; line-height: 64px; width: 640px; white-space: nowrap; }
.link { font-size: 28px; font-weight: 500; line-height: 50px; padding-top: 1px; letter-spacing: 0; }
.home, .report { color: #3f51b5; width: 119px; }
.login { margin-left: auto; }
.tabs { display: flex; height: 96px; }
.tabs a { width: 320px; font-size: 26px; font-weight: 500; line-height: 98px; text-align: center; color: #757575; }
.tabs .selected { color: #3f51b5; border-bottom: 4px solid #3f51b5; line-height: 98px; }

/* page */
.line-title { height: 160px; line-height: 162px; text-align: center; font-size: 40px; font-weight: 500; letter-spacing: .3px; }
.columns { display: grid; grid-template-columns: 766px 2295px; column-gap: 179px; padding: 80px 0 0 60px; }
.card { border-radius: 8px; background: #fff; box-shadow: 0 2px 6px rgba(0,0,0,.24), 0 2px 2px rgba(0,0,0,.16), 0 4px 4px -2px rgba(0,0,0,.2); font-size: 28px; text-align: center; letter-spacing: .1px; line-height: 42px; }
.weather { height: 700px; overflow: hidden; font-family: "DejaVu Sans Condensed", "DejaVu Sans", sans-serif; font-stretch: condensed; color: #454545; letter-spacing: 0; }
.overview { height: 700px; margin-top: 40px; }
.now { width: 600px; height: 264px; padding-top: 20px; }
.city-name { font-weight: 700; font-size: 28px; line-height: 33px; letter-spacing: .7px; }
.sub { font-size: 28px; line-height: 34px; letter-spacing: .1px; }
.current { display: flex; padding: 3px 0 0 102px; }
.current svg { width: 130px; height: 117px; }
.reading { width: 222px; margin-left: 100px; padding-top: 32px; }
.deg { font-size: 58px; line-height: 62px; letter-spacing: -1.6px; }
.cond { font-size: 24px; line-height: 35px; letter-spacing: -.05px; white-space: nowrap; }
.day { width: 600px; height: 110px; display: flex; align-items: center; padding: 2px 0 0 16px; font-size: 26px; letter-spacing: -.8px; text-align: left; }
.day:last-child { height: 112px; }
.day.odd { background: #fafafa; }
.day span { width: 246px; flex: none; }
.day svg { width: 60px; height: 54px; margin: -8px 40px 0 0; }
.day .rain { height: 64px; margin-top: 2px; }
.day b { font-weight: 400; width: 137px; flex: none; letter-spacing: -.3px; }
.day .lo { width: auto; }
.hi { color: #d0342c; }
.lo { color: #3577c2; }
.dash h2 { font-size: 48px; line-height: 60px; height: 102px; letter-spacing: 0; }
.map { position: relative; height: 800px; border-radius: 0 0 4px 4px; overflow: hidden; background: #b3d9fb; box-shadow: 0 2px 6px rgba(0,0,0,.3), 0 3px 3px rgba(0,0,0,.25); }
.canvas { width: 2295px; height: 800px; }
.stats { height: 400px; margin-top: 60px; }

/* map sheets */
.t-a { transform: matrix(.5102, 0, 0, .3333, -5, -122); }
.t-b { transform: matrix(.5102, 0, 0, .3333, 795, -22); }
.t-c { transform: matrix(.5102, 0, 0, .3333, 1555, -22); }
.t-d { transform: matrix(.5102, 0, 0, .3571, -5, 338); }
.t-e { transform: matrix(.5102, 0, 0, .3571, 795, 358); }
.t-f { transform: matrix(.5102, 0, 0, .3333, 1555, 398); }
.canvas path { vector-effect: non-scaling-stroke; stroke-linejoin: round; stroke-linecap: round; }
.green { fill: #e0eedd; }
.beige { fill: #ebe9e4; }
.city { fill: #e7e7e7; }
.airport { fill: #e0e0e0; }
.park { fill: #cdebb9; }
.water { fill: #b3d9fb; }
.creek { fill: none; stroke: #b3d9fb; stroke-width: 2; }
.rails { fill: none; stroke: #d5d5da; stroke-width: 2; }
.street { fill: none; stroke: #fff; stroke-width: 4; }
.art-case { fill: none; stroke: #f3d27d; stroke-width: 8.5; }
.art-core { fill: none; stroke: #fdf0b6; stroke-width: 5.5; }
.hw-case { fill: none; stroke: #f0cd73; stroke-width: 10.5; }
.hw-core { fill: none; stroke: #fde6a3; stroke-width: 6.5; }
.frontier { fill: none; stroke: #777; stroke-width: 3; }
.ferry { fill: none; stroke: #9bbcf0; stroke-width: 2; stroke-dasharray: 14 8; }
.canvas text { paint-order: stroke; stroke: rgba(255,255,255,.75); stroke-width: 5px; stroke-linejoin: round; }
.canvas .shields text, .canvas .sea text { stroke: none; }
.shields { font-size: 22px; fill: #3e3a25; text-anchor: middle; }
.town { font-size: 32px; fill: #555b66; }
.town .big { font-size: 38px; }
.isle { font-size: 31px; fill: #3d4433; }
.area { font-size: 24px; font-weight: 500; fill: #929fb6; }
.route { font-size: 25px; fill: #7a4a1c; text-anchor: middle; }
.sea { font-size: 24px; fill: #5f86cc; }
.strait { font-size: 29px; font-style: italic; }
.edge { font-size: 27px; fill: #80868e; }
.capital { font-size: 46px; font-weight: 500; fill: #44474d; }
.canvas .google { font: 700 40px Lato, sans-serif; fill: #fff; stroke: rgba(110,140,170,.35); stroke-width: 3px; }
.ctl { position: absolute; right: 20px; width: 80px; background: #fff; border: 0; border-radius: 4px; box-shadow: 0 2px 8px -1px rgba(0,0,0,.3); padding: 22px; }
.ctl svg { width: 36px; height: 36px; }
.full { top: 20px; height: 80px; }
.zoom { top: 590px; height: 162px; }
.zoom i { display: block; height: 2px; width: 60px; background: #e6e6e6; margin: 22px 0 22px -12px; }
.legal { position: absolute; right: 0; bottom: 0; display: flex; gap: 4px; font-size: 20px; line-height: 28px; color: #444; }
.legal span { background: #e1edf7; padding: 0 11px; white-space: nowrap; }
```
